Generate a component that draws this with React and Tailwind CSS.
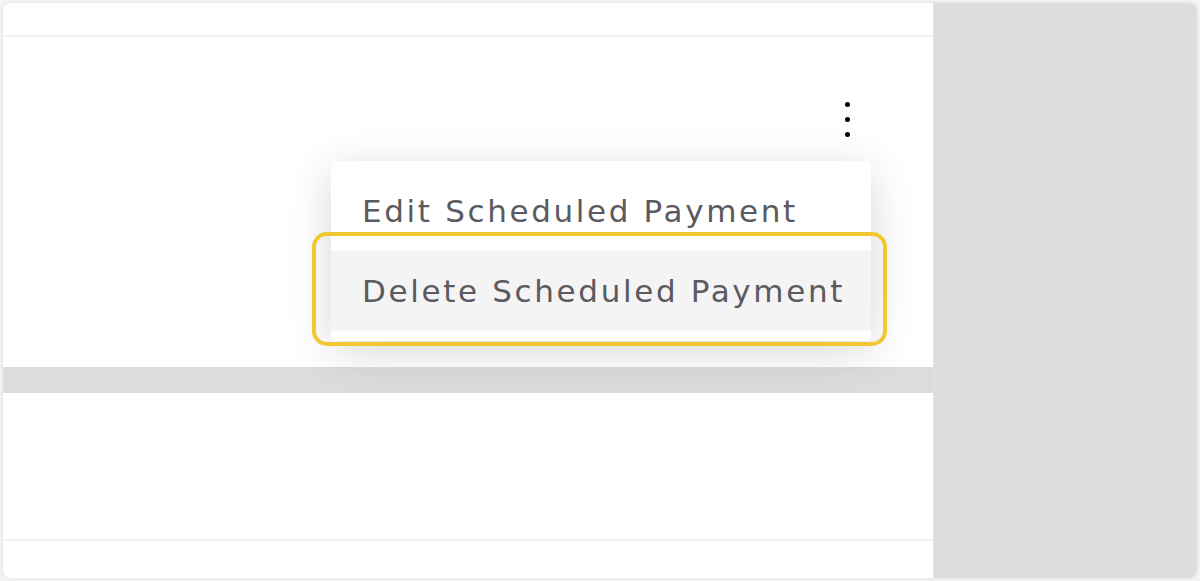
export default function App() {
  return (
    <div className="w-[1200px] h-[581px] bg-[#f3f3f6] p-px">
      <div
        className="w-full h-full border-2 border-[#ececf1] rounded-[10px] flex overflow-hidden bg-white"
        style={{ fontFamily: '"Open Sans", "Liberation Sans", sans-serif' }}
      >
        <div className="relative w-[930px] h-full flex flex-col bg-white">
          <div className="h-[34px] border-b-2 border-[#f0f0f2]" />
          <div className="h-[330px] relative">
            <div className="absolute left-[842px] top-[65px] flex flex-col gap-[10px]">
              <span className="block w-[5px] h-[5px] rounded-full bg-black" />
              <span className="block w-[5px] h-[5px] rounded-full bg-black" />
              <span className="block w-[5px] h-[5px] rounded-full bg-black" />
            </div>
          </div>
          <div className="h-[26px] bg-[#dcdcdc]" />
          <div className="h-[148px] border-b-2 border-[#f0f0f2]" />
          <div className="flex-1" />

          {/* dropdown menu */}
          <div
            className="absolute left-[328px] top-[158px] w-[540px] bg-white rounded-[4px] pt-[10px] pb-[10px] shadow-[0_10px_45px_rgba(0,0,0,0.16)] text-[#5a5a60]"
            style={{ fontFamily: '"DejaVu Sans", "Open Sans", sans-serif' }}
          >
            <div className="h-[80px] flex items-center pl-[31px] text-[31px] tracking-[2.65px] font-normal">
              Edit Scheduled Payment
            </div>
            <div className="h-[80px] flex items-center pl-[31px] text-[31px] tracking-[2.65px] font-normal bg-[#f4f4f4]">
              Delete Scheduled Payment
            </div>
          </div>
          {/* highlight ring */}
          <div className="absolute left-[309px] top-[229px] w-[575px] h-[114px] rounded-[15px] border-[4px] border-[#f2c832]" />
        </div>
        <div className="flex-1 bg-[#dddddd] border-l border-[#e2e2e2]" />
      </div>
    </div>
  );
}
